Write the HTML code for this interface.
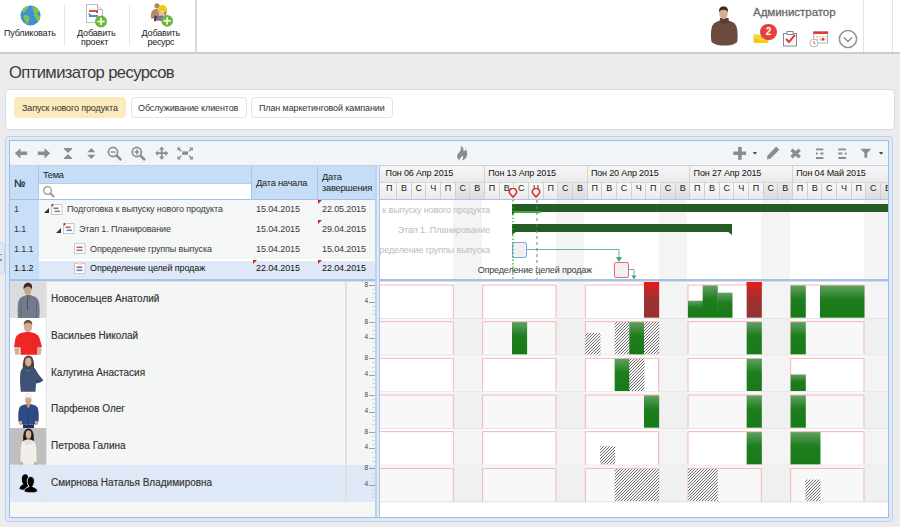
<!DOCTYPE html><html><head><meta charset="utf-8"><style>
*{margin:0;padding:0;box-sizing:border-box}
html,body{width:900px;height:527px;overflow:hidden;background:#ececec;font-family:"Liberation Sans",sans-serif;color:#333;position:relative}
.a{position:absolute}
.t{position:absolute;white-space:nowrap;line-height:1}
</style></head><body>
<div class="a" style="left:0;top:0;width:900px;height:52px;background:#fff"></div>
<div class="a" style="left:0;top:52px;width:900px;height:2px;background:#c9cdd3"></div>
<div class="a" style="left:64px;top:5px;width:1px;height:41px;background:#e8e8e8"></div>
<div class="a" style="left:129px;top:5px;width:1px;height:41px;background:#e8e8e8"></div>
<div class="a" style="left:195px;top:0;width:2px;height:52px;background:#dadbe2"></div>
<div class="a" style="left:863px;top:0;width:1px;height:52px;background:#e4e4e4"></div>
<div class="a" style="left:892px;top:0;width:1px;height:52px;background:#e4e4e4"></div>
<svg class="a" style="left:20px;top:5px" width="21" height="21" viewBox="0 0 21 21">
<circle cx="10.5" cy="10.5" r="10" fill="#3f8fd6"/>
<path d="M1.5,7 C2.5,4 5,1.8 8.5,1 C9.5,2 8.5,3.2 7,3.8 C6,4.5 6.5,5.5 5.5,6.5 C4.5,7.5 3,7.8 1.5,7 Z" fill="#80c34a"/>
<path d="M3.5,10.5 C5.5,9.5 8,10 9,11.5 C10,13 9.5,14.5 8.8,16 C8.2,17.5 7.5,19 6.8,19.5 C6,18.5 5.8,17 5,15.5 C4.3,14 3,12.5 3.5,10.5 Z" fill="#80c34a"/>
<path d="M12.5,1.2 C15.5,1.8 18.5,3.8 19.8,6.5 C19,7.8 17.5,7.5 16.5,8.5 C16.8,10 18.5,10.5 20.3,11.5 C20,14 19,16 18,17 C17,15.5 15.8,13.5 14.8,12 C13.8,10.5 14.5,8.5 13.8,7 C13,5.5 12,3 12.5,1.2 Z" fill="#80c34a"/>
</svg>
<div class="t" style="left:4px;top:29px;font-size:9px;letter-spacing:-0.15px;color:#222">Публиковать</div>
<svg class="a" style="left:85px;top:3px" width="24" height="26" viewBox="0 0 24 26">
<path d="M1.5,1.5 H12.5 L17.5,6.5 V19.5 H1.5 Z" fill="#fff" stroke="#bdbdbd" stroke-width="1"/>
<path d="M12.5,1.5 V6.5 H17.5" fill="#eee" stroke="#bdbdbd" stroke-width="1"/>
<rect x="4" y="7" width="9" height="2" fill="#e84c3d"/>
<rect x="11" y="8.5" width="2" height="1.5" fill="#e84c3d"/>
<rect x="4" y="12" width="9" height="2" fill="#4a90d9"/>
<rect x="3.5" y="10.5" width="2" height="1.5" fill="#4a90d9"/>
<circle cx="16" cy="18.5" r="6" fill="#6cb83a"/>
<rect x="12.4" y="17.7" width="7.2" height="1.6" fill="#fff"/>
<rect x="15.2" y="14.9" width="1.6" height="7.2" fill="#fff"/>
</svg>
<div class="t" style="left:77px;top:29px;font-size:9px;letter-spacing:-0.15px;color:#222">Добавить</div>
<div class="t" style="left:81px;top:38px;font-size:9px;letter-spacing:-0.15px;color:#222">проект</div>
<svg class="a" style="left:145px;top:0px" width="35" height="30" viewBox="145 0 35 30">
<circle cx="157" cy="5.8" r="2.6" fill="#b08866"/>
<path d="M151,18.5 C150.5,14 151.5,10.5 154,9.5 C156,8.8 158.5,9 160,10.5 L158.5,19 Z" fill="#b48a66"/>
<path d="M157.5,11.5 C157.3,7.5 159.5,5 162.5,5 C165.5,5 167.3,7.5 167.2,11.5 Z" fill="#f2c81c"/>
<path d="M158.8,11.5 H166 C166,14.5 164.5,16.5 162.4,16.5 C160.3,16.5 158.8,14.5 158.8,11.5 Z" fill="#e8c48e"/>
<path d="M164.5,11.5 H166.5 C166.5,14 165.8,15.5 164.8,16 Z" fill="#9a7050"/>
<path d="M157.5,15.5 L163.5,15.8 L163,18.5 L157,18.2 Z" fill="#3b82d8"/>
<path d="M157,18.2 L163,18.5 L162.3,21 L156.5,20.5 Z" fill="#e04040"/>
<path d="M154.5,15.5 L157,16 L156.2,21.5 L154,21 Z" fill="#2e3f5e"/>
<circle cx="167.2" cy="20.8" r="5.9" fill="#6cb83a"/>
<rect x="163.6" y="20" width="7.2" height="1.6" fill="#fff"/>
<rect x="166.4" y="17.2" width="1.6" height="7.2" fill="#fff"/>
</svg>
<div class="t" style="left:141.5px;top:29px;font-size:9px;letter-spacing:-0.15px;color:#222">Добавить</div>
<div class="t" style="left:147.5px;top:38px;font-size:9px;letter-spacing:-0.3px;color:#222">ресурс</div>
<svg class="a" style="left:705px;top:2px" width="40" height="48" viewBox="0 0 40 48">
<path d="M6.5,40 C5.5,34 5.8,27 7.5,23.5 C9,20.5 12,19.5 15.5,18.5 L23,18.5 C26.5,19.5 29.5,20.5 31,23.5 C32.7,27 33,34 32.2,40 C29,43 24,43.5 19.5,43.5 C15,43.5 10,43 6.5,40 Z" fill="#6c4a3c"/>
<path d="M15,16 H23.5 L24,20.5 C21,21.8 17.5,21.8 14.5,20.5 Z" fill="#5d3e32"/>
<ellipse cx="18.5" cy="11.5" rx="4.2" ry="5.6" fill="#d6ad92"/>
<path d="M14.2,10.5 C13.6,6 15.8,4.6 18.6,4.6 C21.5,4.6 23.4,6 22.9,10.5 C22.3,8.5 20.6,7.8 18.6,7.8 C16.6,7.8 14.8,8.5 14.2,10.5 Z" fill="#3c2a1f"/>
</svg>
<div class="t" style="left:753px;top:6.3px;font-size:11.6px;letter-spacing:-0.08px;-webkit-text-stroke:0.3px #6a6a6a;color:#6a6a6a">Администратор</div>
<svg class="a" style="left:752px;top:31px" width="18" height="14" viewBox="0 0 18 14">
<path d="M1.6,2.8 L16.5,6.5 V12 H1.6 Z" fill="#f7c90f"/>
<path d="M1.6,2.8 L9.5,8.5 L16.5,6.5 L16.5,7.5 L9.5,9.8 L1.6,4.5 Z" fill="#fff2a8" opacity="0.6"/>
</svg>
<div class="a" style="left:760.4px;top:23.7px;width:16.2px;height:16.2px;border-radius:50%;background:#e5413b"></div>
<div class="t" style="left:760.4px;top:27px;width:16.2px;text-align:center;font-size:10px;font-weight:bold;color:#fff">2</div>
<svg class="a" style="left:782px;top:30px" width="16" height="17" viewBox="0 0 16 17">
<rect x="1.5" y="3.5" width="13" height="12.5" fill="#fff" stroke="#888" stroke-width="1"/>
<rect x="5" y="1.5" width="6" height="3" fill="#fff" stroke="#888" stroke-width="1"/>
<path d="M4,9 L7,12 L13,5" fill="none" stroke="#e53935" stroke-width="2"/>
</svg>
<svg class="a" style="left:808px;top:30px" width="22" height="18" viewBox="0 0 22 18">
<rect x="5.8" y="2" width="13.8" height="11" fill="#fff" stroke="#aaa" stroke-width="0.9"/>
<rect x="5.3" y="1.4" width="14.8" height="2.6" fill="#e53935"/>
<g fill="#d4d4d4"><rect x="8" y="6" width="2" height="1.6"/><rect x="11" y="6" width="2" height="1.6"/><rect x="14" y="6" width="2" height="1.6"/><rect x="17" y="6" width="1.6" height="1.6"/><rect x="8" y="9" width="2" height="1.6"/><rect x="11" y="9" width="2" height="1.6"/><rect x="17" y="9" width="1.6" height="1.6"/></g>
<rect x="13.6" y="8" width="2.8" height="2.6" fill="#e53935"/>
<circle cx="5.9" cy="13" r="4" fill="#fff" stroke="#b0b0b0" stroke-width="0.9"/>
<path d="M5.9,10.8 V13 L7.5,14" fill="none" stroke="#e53935" stroke-width="0.9"/>
</svg>
<svg class="a" style="left:838px;top:29px" width="20" height="20" viewBox="0 0 20 20">
<circle cx="10" cy="10" r="8.6" fill="none" stroke="#909090" stroke-width="1.5"/>
<path d="M6,8.5 L10,12.5 L14,8.5" fill="none" stroke="#909090" stroke-width="1.5"/>
</svg>
<div class="t" style="left:9px;top:65.2px;font-size:16.6px;letter-spacing:-0.6px;color:#3a3a3a">Оптимизатор ресурсов</div>
<div class="a" style="left:5px;top:89px;width:890px;height:41px;background:#fff;border:1px solid #d9dbe0;border-radius:5px"></div>
<div class="a" style="left:14px;top:97px;width:112px;height:21px;background:#fbeabb;border-radius:4px"></div>
<div class="t" style="left:22px;top:104px;font-size:9px;letter-spacing:-0.12px;color:#333">Запуск нового продукта</div>
<div class="a" style="left:131px;top:97px;width:116px;height:21px;background:#fff;border:1px solid #e2e2e2;border-radius:4px"></div>
<div class="t" style="left:138px;top:104px;font-size:9px;letter-spacing:-0.12px;color:#333">Обслуживание клиентов</div>
<div class="a" style="left:251px;top:97px;width:142px;height:21px;background:#fff;border:1px solid #e2e2e2;border-radius:4px"></div>
<div class="t" style="left:259px;top:104px;font-size:9px;letter-spacing:-0.12px;color:#333">План маркетинговой кампании</div>
<div class="a" style="left:5px;top:136px;width:888px;height:386px;background:#dfe8f5;border:1px solid #b9d0ee;border-radius:3px"></div>
<div class="a" style="left:9px;top:140px;width:880px;height:378px;background:#fff;border:1px solid #9dbde8"></div>
<div class="a" style="left:10px;top:141px;width:878px;height:25px;background:#f1f4f8;border-bottom:1px solid #d0d0d0"></div>
<svg class="a" style="left:10px;top:141px" width="200" height="25" viewBox="10 141 200 25">
<path d="M14.8,153.3 L20.5,148.2 L20.5,151.6 L27.2,151.6 L27.2,155 L20.5,155 L20.5,158.5 Z" fill="#8c8c8c"/>
<path d="M50.2,153.3 L44.5,148.2 L44.5,151.6 L37.8,151.6 L37.8,155 L44.5,155 L44.5,158.5 Z" fill="#8c8c8c"/>
<path d="M64,148 H72 V149 L68,153 L64,149 Z M64,159 H72 V158 L68,154 L64,158 Z" fill="#8c8c8c"/>
<path d="M87.3,152.3 L91.3,148 L95.3,152.3 Z M87.3,154.7 L91.3,159 L95.3,154.7 Z" fill="#8c8c8c"/>
<circle cx="113" cy="152" r="4.6" fill="none" stroke="#8c8c8c" stroke-width="1.7"/>
<path d="M116.2,155.2 L121.2,160.2" stroke="#8c8c8c" stroke-width="2.6"/>
<path d="M110.6,152 H115.4" stroke="#8c8c8c" stroke-width="1.4"/>
<circle cx="136.8" cy="152" r="4.6" fill="none" stroke="#8c8c8c" stroke-width="1.7"/>
<path d="M140,155.2 L145,160.2" stroke="#8c8c8c" stroke-width="2.6"/>
<path d="M134.4,152 H139.2 M136.8,149.6 V154.4" stroke="#8c8c8c" stroke-width="1.4"/>
<path d="M161.7,146.6 L164.4,149.6 H162.6 V152.3 H165.3 V150.5 L168.3,153.2 L165.3,155.9 V154.1 H162.6 V156.8 H164.4 L161.7,159.8 L159,156.8 H160.8 V154.1 H158.1 V155.9 L155.1,153.2 L158.1,150.5 V152.3 H160.8 V149.6 H159 Z" fill="#8c8c8c"/>
<path d="M178.5,148.5 L181.2,151.2 M191.8,148.5 L189.1,151.2 M178.5,158.5 L181.2,155.8 M191.8,158.5 L189.1,155.8" stroke="#8c8c8c" stroke-width="1.4"/>
<path d="M177.4,147.4 H180.9 L177.4,150.9 Z M192.9,147.4 H189.4 L192.9,150.9 Z M177.4,159.6 H180.9 L177.4,156.1 Z M192.9,159.6 H189.4 L192.9,156.1 Z" fill="#8c8c8c"/>
<rect x="182.2" y="151.4" width="5.8" height="3.4" fill="#8c8c8c"/>
</svg>
<svg class="a" style="left:455px;top:144px" width="14" height="18" viewBox="0 0 14 18">
<path d="M5.5,1.8 C9,3.5 8.5,6.5 8.8,7.5 C9.5,6.8 10.5,6 11,5.2 C12.5,8 12.5,11.5 11.5,13 C10.5,15 8.5,16.2 7,16.2 C8.5,14.8 8.5,12.5 7.2,11.5 C6.8,13 5.5,14 4.8,14.6 C4.5,15.2 4.6,15.9 5.2,16.2 C3.5,15.8 2,14.5 2,12.5 C2,10 4.5,8.5 5.5,6.5 C6,5.2 6,3.5 5.5,1.8 Z" fill="#8c8c8c"/>
</svg>
<svg class="a" style="left:725px;top:141px" width="165" height="25" viewBox="725 141 165 25">
<path d="M738.1,146.9 H741.7 V151.6 H746.1 V155.1 H741.7 V159.8 H738.1 V155.1 H733.2 V151.6 H738.1 Z" fill="#8c8c8c"/>
<path d="M752.8,152.2 H757 L754.9,154.4 Z" fill="#222"/>
<path d="M776.2,146.6 L779.3,149.7 L770.6,158.4 L766.9,159.6 L767.6,155.6 Z" fill="#8c8c8c"/>
<path d="M791.5,149.7 L799.7,157.2 M799.7,149.7 L791.5,157.2" stroke="#8c8c8c" stroke-width="3.4"/>
<path d="M816,149.4 H823.4 M820.3,153.5 H823.4 M816,158 H823.4" stroke="#8c8c8c" stroke-width="1.8"/>
<path d="M816,151.9 L818.3,153.5 L816,155.1 Z" fill="#8c8c8c"/>
<path d="M838.3,149.4 H846 M838.3,153.5 H842.3 M838.3,158 H846" stroke="#8c8c8c" stroke-width="1.8"/>
<path d="M846.5,151.9 L844.2,153.5 L846.5,155.1 Z" fill="#8c8c8c"/>
<path d="M860.3,148.7 H871.3 L867.2,153 V157.7 H864.4 V153 Z" fill="#8c8c8c"/>
<path d="M879,152.2 H883.2 L881.1,154.4 Z" fill="#222"/>
</svg>
<div class="a" style="left:10px;top:166px;width:366px;height:34px;background:#c6ddf8;border-bottom:1px solid #9fbfe6"></div>
<div class="a" style="left:38px;top:166px;width:1px;height:34px;background:#a9c5ea"></div>
<div class="a" style="left:251px;top:166px;width:1px;height:34px;background:#a9c5ea"></div>
<div class="a" style="left:317px;top:166px;width:1px;height:34px;background:#a9c5ea"></div>
<div class="a" style="left:375px;top:166px;width:1px;height:34px;background:#a9c5ea"></div>
<div class="t" style="left:14px;top:177.5px;font-size:10.5px;color:#1a1a1a;-webkit-text-stroke:0.2px #1a1a1a">№</div>
<div class="t" style="left:43px;top:170.5px;font-size:9.3px;letter-spacing:-0.3px;color:#1a1a1a">Тема</div>
<div class="a" style="left:39px;top:183px;width:212px;height:16px;background:#fff;border-top:1px solid #b5cce8"></div>
<svg class="a" style="left:42px;top:185px" width="14" height="14" viewBox="0 0 14 14">
<circle cx="5.5" cy="5.5" r="3.8" fill="none" stroke="#9a9a9a" stroke-width="1.3"/>
<path d="M8.3,8.3 L12,12" stroke="#9a9a9a" stroke-width="2"/></svg>
<div class="t" style="left:256px;top:179px;font-size:9.3px;letter-spacing:-0.25px;color:#222">Дата начала</div>
<div class="t" style="left:322px;top:172px;font-size:9.3px;letter-spacing:-0.25px;color:#222;line-height:10.5px">Дата<br>завершения</div>
<div class="a" style="left:39px;top:200px;width:337px;height:20px;background:#f5f6f6"></div>
<div class="a" style="left:10px;top:200px;width:29px;height:20px;background:#c9def7"></div>
<div class="t" style="left:14px;top:204.4px;font-size:9px;letter-spacing:-0.12px;transform:scaleY(1.1);transform-origin:0 0;color:#3a3a3a">1</div>
<svg class="a" style="left:44px;top:208px" width="5" height="5" viewBox="0 0 5 5"><path d="M0,5 L5,0 V5 Z" fill="#333"/></svg>
<svg class="a" style="left:51px;top:202.5px" width="12" height="12" viewBox="0 0 12 12">
<rect x="0.5" y="1.5" width="10.5" height="10" fill="#fff" stroke="#c8c8c8"/>
<rect x="2.5" y="4.5" width="5" height="1.6" fill="#e84c3d"/><rect x="3.5" y="7.5" width="5.5" height="1.6" fill="#4a90d9"/>
<path d="M1.5,1 V3.5 M0.3,2.2 H2.7" stroke="#444" stroke-width="0.8"/></svg>
<div class="t" style="left:67px;top:204.4px;font-size:9px;letter-spacing:-0.12px;transform:scaleY(1.1);transform-origin:0 0;color:#3a3a3a">Подготовка к выпуску нового продукта</div>
<div class="t" style="left:256px;top:204.4px;font-size:9px;letter-spacing:-0.12px;transform:scaleY(1.1);transform-origin:0 0;color:#3a3a3a">15.04.2015</div>
<div class="t" style="left:322px;top:204.4px;font-size:9px;letter-spacing:-0.12px;transform:scaleY(1.1);transform-origin:0 0;color:#3a3a3a">22.05.2015</div>
<div class="a" style="left:39px;top:219.67px;width:337px;height:20px;background:#f5f6f6"></div>
<div class="a" style="left:10px;top:219.67px;width:29px;height:20px;background:#c9def7"></div>
<div class="t" style="left:14px;top:224.07px;font-size:9px;letter-spacing:-0.12px;transform:scaleY(1.1);transform-origin:0 0;color:#3a3a3a">1.1</div>
<svg class="a" style="left:56px;top:227.67px" width="5" height="5" viewBox="0 0 5 5"><path d="M0,5 L5,0 V5 Z" fill="#333"/></svg>
<svg class="a" style="left:63px;top:222.17px" width="12" height="12" viewBox="0 0 12 12">
<rect x="0.5" y="1.5" width="10.5" height="10" fill="#fff" stroke="#c8c8c8"/>
<rect x="2.5" y="4.5" width="5" height="1.6" fill="#e84c3d"/><rect x="3.5" y="7.5" width="5.5" height="1.6" fill="#4a90d9"/>
<path d="M1.5,1 V3.5 M0.3,2.2 H2.7" stroke="#444" stroke-width="0.8"/></svg>
<div class="t" style="left:79px;top:224.07px;font-size:9px;letter-spacing:-0.12px;transform:scaleY(1.1);transform-origin:0 0;color:#3a3a3a">Этап 1. Планирование</div>
<div class="t" style="left:256px;top:224.07px;font-size:9px;letter-spacing:-0.12px;transform:scaleY(1.1);transform-origin:0 0;color:#3a3a3a">15.04.2015</div>
<div class="t" style="left:322px;top:224.07px;font-size:9px;letter-spacing:-0.12px;transform:scaleY(1.1);transform-origin:0 0;color:#3a3a3a">29.04.2015</div>
<div class="a" style="left:39px;top:239.34px;width:337px;height:20px;background:#f5f6f6"></div>
<div class="a" style="left:10px;top:239.34px;width:29px;height:20px;background:#c9def7"></div>
<div class="t" style="left:14px;top:243.74px;font-size:9px;letter-spacing:-0.12px;transform:scaleY(1.1);transform-origin:0 0;color:#3a3a3a">1.1.1</div>
<svg class="a" style="left:74px;top:241.84px" width="12" height="12" viewBox="0 0 12 12">
<rect x="0.5" y="1.5" width="10.5" height="10" fill="#fff" stroke="#c8c8c8"/>
<rect x="4" y="0.5" width="3.5" height="2" fill="#ddd"/>
<rect x="2.5" y="4.5" width="6" height="1.6" fill="#e84c3d"/><rect x="2.5" y="7.5" width="6" height="1.6" fill="#4a90d9"/></svg>
<div class="t" style="left:90px;top:243.74px;font-size:9px;letter-spacing:-0.12px;transform:scaleY(1.1);transform-origin:0 0;color:#3a3a3a">Определение группы выпуска</div>
<div class="t" style="left:256px;top:243.74px;font-size:9px;letter-spacing:-0.12px;transform:scaleY(1.1);transform-origin:0 0;color:#3a3a3a">15.04.2015</div>
<div class="t" style="left:322px;top:243.74px;font-size:9px;letter-spacing:-0.12px;transform:scaleY(1.1);transform-origin:0 0;color:#3a3a3a">15.04.2015</div>
<div class="a" style="left:39px;top:260.5px;width:337px;height:18.5px;background:#dfe8f6"></div>
<div class="a" style="left:10px;top:259.01px;width:29px;height:20px;background:#c9def7"></div>
<div class="t" style="left:14px;top:263.41px;font-size:9px;letter-spacing:-0.12px;transform:scaleY(1.1);transform-origin:0 0;color:#111">1.1.2</div>
<svg class="a" style="left:74px;top:261.51px" width="12" height="12" viewBox="0 0 12 12">
<rect x="0.5" y="1.5" width="10.5" height="10" fill="#fff" stroke="#c8c8c8"/>
<rect x="4" y="0.5" width="3.5" height="2" fill="#ddd"/>
<rect x="2.5" y="4.5" width="6" height="1.6" fill="#e84c3d"/><rect x="2.5" y="7.5" width="6" height="1.6" fill="#4a90d9"/></svg>
<div class="t" style="left:90px;top:263.41px;font-size:9px;letter-spacing:-0.12px;transform:scaleY(1.1);transform-origin:0 0;color:#111">Определение целей продаж</div>
<div class="t" style="left:256px;top:263.41px;font-size:9px;letter-spacing:-0.12px;transform:scaleY(1.1);transform-origin:0 0;color:#111">22.04.2015</div>
<div class="t" style="left:322px;top:263.41px;font-size:9px;letter-spacing:-0.12px;transform:scaleY(1.1);transform-origin:0 0;color:#111">22.04.2015</div>
<svg class="a" style="left:318px;top:200px" width="5" height="5"><path d="M0,0 H4 L0,4 Z" fill="#d42020"/></svg>
<svg class="a" style="left:318px;top:220px" width="5" height="5"><path d="M0,0 H4 L0,4 Z" fill="#d42020"/></svg>
<svg class="a" style="left:253px;top:260px" width="5" height="5"><path d="M0,0 H4 L0,4 Z" fill="#d42020"/></svg>
<svg class="a" style="left:318px;top:260px" width="5" height="5"><path d="M0,0 H4 L0,4 Z" fill="#d42020"/></svg>
<div class="a" style="left:10px;top:502px;width:366px;height:15px;background:#f5f6f6"></div>
<div class="a" style="left:380px;top:166px;width:508px;height:17px;background:linear-gradient(#f7f7f7,#e9e9e9);border-bottom:1px solid #d6d6d6"></div>
<div class="a" style="left:380px;top:183px;width:508px;height:16px;background:linear-gradient(#f8f8f8,#ebebeb)"></div>
<div class="a" style="left:380px;top:199px;width:508px;height:1px;background:#a9c6ea"></div>
<div class="a" style="left:380px;top:166px;width:508px;height:34px;overflow:hidden"><div class="a" style="left:-380px;top:-166px;width:900px;height:527px"><div class="t" style="left:385.6px;top:168.5px;font-size:9px;letter-spacing:-0.15px;color:#111">Пон 06 Апр 2015</div>
<div class="t" style="left:488.27px;top:168.5px;font-size:9px;letter-spacing:-0.15px;color:#111">Пон 13 Апр 2015</div>
<div class="a" style="left:483.97px;top:166px;width:1px;height:17px;background:#d4d4d4"></div>
<div class="t" style="left:590.93px;top:168.5px;font-size:9px;letter-spacing:-0.15px;color:#111">Пон 20 Апр 2015</div>
<div class="a" style="left:586.63px;top:166px;width:1px;height:17px;background:#d4d4d4"></div>
<div class="t" style="left:693.6px;top:168.5px;font-size:9px;letter-spacing:-0.15px;color:#111">Пон 27 Апр 2015</div>
<div class="a" style="left:689.3px;top:166px;width:1px;height:17px;background:#d4d4d4"></div>
<div class="t" style="left:796.27px;top:168.5px;font-size:9px;letter-spacing:-0.15px;color:#111">Пон 04 Май 2015</div>
<div class="a" style="left:791.97px;top:166px;width:1px;height:17px;background:#d4d4d4"></div>
<div class="a" style="left:395.97px;top:183px;width:1px;height:16px;background:#d0d0d0"></div>
<div class="t" style="left:382px;top:184.3px;width:14.67px;text-align:center;font-size:9px;color:#1a1a1a">П</div>
<div class="a" style="left:410.63px;top:183px;width:1px;height:16px;background:#d0d0d0"></div>
<div class="t" style="left:396.67px;top:184.3px;width:14.67px;text-align:center;font-size:9px;color:#1a1a1a">В</div>
<div class="a" style="left:425.3px;top:183px;width:1px;height:16px;background:#d0d0d0"></div>
<div class="t" style="left:411.33px;top:184.3px;width:14.67px;text-align:center;font-size:9px;color:#1a1a1a">С</div>
<div class="a" style="left:439.97px;top:183px;width:1px;height:16px;background:#d0d0d0"></div>
<div class="t" style="left:426px;top:184.3px;width:14.67px;text-align:center;font-size:9px;color:#1a1a1a">Ч</div>
<div class="a" style="left:454.63px;top:183px;width:1px;height:16px;background:#d0d0d0"></div>
<div class="t" style="left:440.67px;top:184.3px;width:14.67px;text-align:center;font-size:9px;color:#1a1a1a">П</div>
<div class="a" style="left:455.63px;top:183px;width:14.67px;height:16px;background:linear-gradient(#ececec,#dcdcdc)"></div>
<div class="a" style="left:469.3px;top:183px;width:1px;height:16px;background:#d0d0d0"></div>
<div class="t" style="left:455.33px;top:184.3px;width:14.67px;text-align:center;font-size:9px;color:#1a1a1a">С</div>
<div class="a" style="left:470.3px;top:183px;width:14.67px;height:16px;background:linear-gradient(#ececec,#dcdcdc)"></div>
<div class="a" style="left:483.97px;top:183px;width:1px;height:16px;background:#d0d0d0"></div>
<div class="t" style="left:470px;top:184.3px;width:14.67px;text-align:center;font-size:9px;color:#1a1a1a">В</div>
<div class="a" style="left:498.63px;top:183px;width:1px;height:16px;background:#d0d0d0"></div>
<div class="t" style="left:484.67px;top:184.3px;width:14.67px;text-align:center;font-size:9px;color:#1a1a1a">П</div>
<div class="a" style="left:513.3px;top:183px;width:1px;height:16px;background:#d0d0d0"></div>
<div class="t" style="left:499.33px;top:184.3px;width:14.67px;text-align:center;font-size:9px;color:#1a1a1a">В</div>
<div class="a" style="left:527.97px;top:183px;width:1px;height:16px;background:#d0d0d0"></div>
<div class="t" style="left:514px;top:184.3px;width:14.67px;text-align:center;font-size:9px;color:#1a1a1a">С</div>
<div class="a" style="left:542.63px;top:183px;width:1px;height:16px;background:#d0d0d0"></div>
<div class="t" style="left:528.67px;top:184.3px;width:14.67px;text-align:center;font-size:9px;color:#1a1a1a">Ч</div>
<div class="a" style="left:557.3px;top:183px;width:1px;height:16px;background:#d0d0d0"></div>
<div class="t" style="left:543.33px;top:184.3px;width:14.67px;text-align:center;font-size:9px;color:#1a1a1a">П</div>
<div class="a" style="left:558.3px;top:183px;width:14.67px;height:16px;background:linear-gradient(#ececec,#dcdcdc)"></div>
<div class="a" style="left:571.97px;top:183px;width:1px;height:16px;background:#d0d0d0"></div>
<div class="t" style="left:558px;top:184.3px;width:14.67px;text-align:center;font-size:9px;color:#1a1a1a">С</div>
<div class="a" style="left:572.97px;top:183px;width:14.67px;height:16px;background:linear-gradient(#ececec,#dcdcdc)"></div>
<div class="a" style="left:586.63px;top:183px;width:1px;height:16px;background:#d0d0d0"></div>
<div class="t" style="left:572.67px;top:184.3px;width:14.67px;text-align:center;font-size:9px;color:#1a1a1a">В</div>
<div class="a" style="left:601.3px;top:183px;width:1px;height:16px;background:#d0d0d0"></div>
<div class="t" style="left:587.33px;top:184.3px;width:14.67px;text-align:center;font-size:9px;color:#1a1a1a">П</div>
<div class="a" style="left:615.97px;top:183px;width:1px;height:16px;background:#d0d0d0"></div>
<div class="t" style="left:602px;top:184.3px;width:14.67px;text-align:center;font-size:9px;color:#1a1a1a">В</div>
<div class="a" style="left:630.63px;top:183px;width:1px;height:16px;background:#d0d0d0"></div>
<div class="t" style="left:616.67px;top:184.3px;width:14.67px;text-align:center;font-size:9px;color:#1a1a1a">С</div>
<div class="a" style="left:645.3px;top:183px;width:1px;height:16px;background:#d0d0d0"></div>
<div class="t" style="left:631.33px;top:184.3px;width:14.67px;text-align:center;font-size:9px;color:#1a1a1a">Ч</div>
<div class="a" style="left:659.97px;top:183px;width:1px;height:16px;background:#d0d0d0"></div>
<div class="t" style="left:646px;top:184.3px;width:14.67px;text-align:center;font-size:9px;color:#1a1a1a">П</div>
<div class="a" style="left:660.97px;top:183px;width:14.67px;height:16px;background:linear-gradient(#ececec,#dcdcdc)"></div>
<div class="a" style="left:674.63px;top:183px;width:1px;height:16px;background:#d0d0d0"></div>
<div class="t" style="left:660.67px;top:184.3px;width:14.67px;text-align:center;font-size:9px;color:#1a1a1a">С</div>
<div class="a" style="left:675.63px;top:183px;width:14.67px;height:16px;background:linear-gradient(#ececec,#dcdcdc)"></div>
<div class="a" style="left:689.3px;top:183px;width:1px;height:16px;background:#d0d0d0"></div>
<div class="t" style="left:675.33px;top:184.3px;width:14.67px;text-align:center;font-size:9px;color:#1a1a1a">В</div>
<div class="a" style="left:703.97px;top:183px;width:1px;height:16px;background:#d0d0d0"></div>
<div class="t" style="left:690px;top:184.3px;width:14.67px;text-align:center;font-size:9px;color:#1a1a1a">П</div>
<div class="a" style="left:718.63px;top:183px;width:1px;height:16px;background:#d0d0d0"></div>
<div class="t" style="left:704.67px;top:184.3px;width:14.67px;text-align:center;font-size:9px;color:#1a1a1a">В</div>
<div class="a" style="left:733.3px;top:183px;width:1px;height:16px;background:#d0d0d0"></div>
<div class="t" style="left:719.33px;top:184.3px;width:14.67px;text-align:center;font-size:9px;color:#1a1a1a">С</div>
<div class="a" style="left:747.97px;top:183px;width:1px;height:16px;background:#d0d0d0"></div>
<div class="t" style="left:734px;top:184.3px;width:14.67px;text-align:center;font-size:9px;color:#1a1a1a">Ч</div>
<div class="a" style="left:762.63px;top:183px;width:1px;height:16px;background:#d0d0d0"></div>
<div class="t" style="left:748.67px;top:184.3px;width:14.67px;text-align:center;font-size:9px;color:#1a1a1a">П</div>
<div class="a" style="left:763.63px;top:183px;width:14.67px;height:16px;background:linear-gradient(#ececec,#dcdcdc)"></div>
<div class="a" style="left:777.3px;top:183px;width:1px;height:16px;background:#d0d0d0"></div>
<div class="t" style="left:763.33px;top:184.3px;width:14.67px;text-align:center;font-size:9px;color:#1a1a1a">С</div>
<div class="a" style="left:778.3px;top:183px;width:14.67px;height:16px;background:linear-gradient(#ececec,#dcdcdc)"></div>
<div class="a" style="left:791.97px;top:183px;width:1px;height:16px;background:#d0d0d0"></div>
<div class="t" style="left:778px;top:184.3px;width:14.67px;text-align:center;font-size:9px;color:#1a1a1a">В</div>
<div class="a" style="left:806.63px;top:183px;width:1px;height:16px;background:#d0d0d0"></div>
<div class="t" style="left:792.67px;top:184.3px;width:14.67px;text-align:center;font-size:9px;color:#1a1a1a">П</div>
<div class="a" style="left:821.3px;top:183px;width:1px;height:16px;background:#d0d0d0"></div>
<div class="t" style="left:807.33px;top:184.3px;width:14.67px;text-align:center;font-size:9px;color:#1a1a1a">В</div>
<div class="a" style="left:835.97px;top:183px;width:1px;height:16px;background:#d0d0d0"></div>
<div class="t" style="left:822px;top:184.3px;width:14.67px;text-align:center;font-size:9px;color:#1a1a1a">С</div>
<div class="a" style="left:850.63px;top:183px;width:1px;height:16px;background:#d0d0d0"></div>
<div class="t" style="left:836.67px;top:184.3px;width:14.67px;text-align:center;font-size:9px;color:#1a1a1a">Ч</div>
<div class="a" style="left:865.3px;top:183px;width:1px;height:16px;background:#d0d0d0"></div>
<div class="t" style="left:851.33px;top:184.3px;width:14.67px;text-align:center;font-size:9px;color:#1a1a1a">П</div>
<div class="a" style="left:866.3px;top:183px;width:14.67px;height:16px;background:linear-gradient(#ececec,#dcdcdc)"></div>
<div class="a" style="left:879.97px;top:183px;width:1px;height:16px;background:#d0d0d0"></div>
<div class="t" style="left:866px;top:184.3px;width:14.67px;text-align:center;font-size:9px;color:#1a1a1a">С</div>
<div class="a" style="left:880.97px;top:183px;width:14.67px;height:16px;background:linear-gradient(#ececec,#dcdcdc)"></div>
<div class="a" style="left:894.63px;top:183px;width:1px;height:16px;background:#d0d0d0"></div>
<div class="t" style="left:880.67px;top:184.3px;width:14.67px;text-align:center;font-size:9px;color:#1a1a1a">В</div></div></div>
<div class="a" style="left:380px;top:200px;width:508px;height:79px;overflow:hidden"><div class="a" style="left:-380px;top:-200px;width:900px;height:527px"><div class="a" style="left:380px;top:200px;width:508px;height:79px;background:#fff"></div>
<div class="a" style="left:453.33px;top:200px;width:28.33px;height:79px;background:#f4f4f4"></div>
<div class="a" style="left:556px;top:200px;width:28.33px;height:79px;background:#f4f4f4"></div>
<div class="a" style="left:658.67px;top:200px;width:28.33px;height:79px;background:#f4f4f4"></div>
<div class="a" style="left:761.33px;top:200px;width:28.33px;height:79px;background:#f4f4f4"></div>
<div class="a" style="left:864px;top:200px;width:28.33px;height:79px;background:#f4f4f4"></div>
<div class="t" style="left:200px;top:206px;width:290px;text-align:right;font-size:9px;letter-spacing:-0.1px;color:#bcbcbc">Подготовка к выпуску нового продукта</div>
<div class="t" style="left:200px;top:226px;width:290px;text-align:right;font-size:9px;letter-spacing:-0.1px;color:#bcbcbc">Этап 1. Планирование</div>
<div class="t" style="left:200px;top:246px;width:290px;text-align:right;font-size:9px;letter-spacing:-0.1px;color:#bcbcbc">Определение группы выпуска</div>
<div class="t" style="left:300px;top:266px;width:292px;text-align:right;font-size:9px;letter-spacing:-0.15px;color:#3a3a3a">Определение целей продаж</div>
<div class="a" style="left:512px;top:204px;width:376px;height:8px;background:#245c24"></div>
<svg class="a" style="left:512px;top:211px" width="6" height="5"><path d="M0,0 H5 L0,4 Z" fill="#245c24"/></svg>
<div class="a" style="left:514px;top:211px;width:27px;height:2px;background:#3fae3f"></div>
<div class="a" style="left:512px;top:224px;width:220px;height:8px;background:#245c24"></div>
<svg class="a" style="left:512px;top:231px" width="6" height="5"><path d="M0,0 H5 L0,4 Z" fill="#245c24"/></svg>
<svg class="a" style="left:726px;top:231px" width="6" height="5"><path d="M6,0 H1 L6,4 Z" fill="#245c24"/></svg>
<div class="a" style="left:512px;top:242px;width:15px;height:16px;background:#f0f0f0;border:1.5px solid #7aaae6;border-radius:2px"></div>
<div class="a" style="left:614px;top:262px;width:15px;height:16px;background:#f0f0f0;border:1.5px solid #ea6a6a;border-radius:2px"></div>
<svg class="a" style="left:380px;top:200px" width="508" height="80" viewBox="380 200 508 80">
<path d="M527,249.5 H619 V258" fill="none" stroke="#5fb99a" stroke-width="1"/>
<path d="M616,257 H622 L619,262 Z" fill="#3aa57a"/>
<path d="M629,269.5 H634 V276" fill="none" stroke="#5fb99a" stroke-width="1"/>
<path d="M631.5,275.5 H636.5 L634,279.5 Z" fill="#3aa57a"/>
<path d="M513,200 V280" stroke="#22aa22" stroke-width="1.2" stroke-dasharray="1.5,2"/>
<path d="M537,200 V280" stroke="#777" stroke-width="1" stroke-dasharray="3,3"/>
</svg></div></div>
<svg class="a" style="left:508px;top:188px" width="10" height="10" viewBox="0 0 10 10">
<path d="M5,9 L2.3,6 A3.5,3.5 0 1 1 7.7,6 Z" fill="#fff" stroke="#e02424" stroke-width="1.5"/></svg>
<svg class="a" style="left:531.3px;top:188px" width="10" height="10" viewBox="0 0 10 10">
<path d="M5,9 L2.3,6 A3.5,3.5 0 1 1 7.7,6 Z" fill="#fff" stroke="#e02424" stroke-width="1.5"/></svg>
<div class="a" style="left:10px;top:281.7px;width:366px;height:36.67px;background:#f4f5f5"></div>
<div class="t" style="left:51px;top:294.3px;font-size:10px;color:#333;-webkit-text-stroke:0.15px #333">Новосельцев Анатолий</div>
<div class="a" style="left:345px;top:281.7px;width:1.5px;height:36.67px;background:#e0e0e0"></div>
<div class="a" style="left:46px;top:281.7px;width:1px;height:36.67px;background:#e6e6e6"></div>
<div class="t" style="left:364.5px;top:282px;font-size:6.5px;color:#444">8</div>
<div class="t" style="left:364.5px;top:297.6px;font-size:6.5px;color:#444">4</div>
<div class="a" style="left:369px;top:285px;width:6px;height:1px;background:#a0a0a0"></div>
<div class="a" style="left:369px;top:301.6px;width:6px;height:1px;background:#a0a0a0"></div>
<div class="a" style="left:371.5px;top:289.15px;width:3.5px;height:1px;background:#d6d6d6"></div>
<div class="a" style="left:371.5px;top:293.3px;width:3.5px;height:1px;background:#d6d6d6"></div>
<div class="a" style="left:371.5px;top:297.45px;width:3.5px;height:1px;background:#d6d6d6"></div>
<div class="a" style="left:371.5px;top:305.75px;width:3.5px;height:1px;background:#d6d6d6"></div>
<div class="a" style="left:371.5px;top:309.9px;width:3.5px;height:1px;background:#d6d6d6"></div>
<div class="a" style="left:371.5px;top:314.05px;width:3.5px;height:1px;background:#d6d6d6"></div>
<div class="a" style="left:10px;top:318.37px;width:366px;height:36.67px;background:#f4f5f5"></div>
<div class="t" style="left:51px;top:330.97px;font-size:10px;color:#333;-webkit-text-stroke:0.15px #333">Васильев Николай</div>
<div class="a" style="left:345px;top:318.37px;width:1.5px;height:36.67px;background:#e0e0e0"></div>
<div class="a" style="left:46px;top:318.37px;width:1px;height:36.67px;background:#e6e6e6"></div>
<div class="t" style="left:364.5px;top:318.67px;font-size:6.5px;color:#444">8</div>
<div class="t" style="left:364.5px;top:334.27px;font-size:6.5px;color:#444">4</div>
<div class="a" style="left:369px;top:321.67px;width:6px;height:1px;background:#a0a0a0"></div>
<div class="a" style="left:369px;top:338.27px;width:6px;height:1px;background:#a0a0a0"></div>
<div class="a" style="left:371.5px;top:325.82px;width:3.5px;height:1px;background:#d6d6d6"></div>
<div class="a" style="left:371.5px;top:329.97px;width:3.5px;height:1px;background:#d6d6d6"></div>
<div class="a" style="left:371.5px;top:334.12px;width:3.5px;height:1px;background:#d6d6d6"></div>
<div class="a" style="left:371.5px;top:342.42px;width:3.5px;height:1px;background:#d6d6d6"></div>
<div class="a" style="left:371.5px;top:346.57px;width:3.5px;height:1px;background:#d6d6d6"></div>
<div class="a" style="left:371.5px;top:350.72px;width:3.5px;height:1px;background:#d6d6d6"></div>
<div class="a" style="left:10px;top:355.04px;width:366px;height:36.67px;background:#f4f5f5"></div>
<div class="t" style="left:51px;top:367.64px;font-size:10px;color:#333;-webkit-text-stroke:0.15px #333">Калугина Анастасия</div>
<div class="a" style="left:345px;top:355.04px;width:1.5px;height:36.67px;background:#e0e0e0"></div>
<div class="a" style="left:46px;top:355.04px;width:1px;height:36.67px;background:#e6e6e6"></div>
<div class="t" style="left:364.5px;top:355.34px;font-size:6.5px;color:#444">8</div>
<div class="t" style="left:364.5px;top:370.94px;font-size:6.5px;color:#444">4</div>
<div class="a" style="left:369px;top:358.34px;width:6px;height:1px;background:#a0a0a0"></div>
<div class="a" style="left:369px;top:374.94px;width:6px;height:1px;background:#a0a0a0"></div>
<div class="a" style="left:371.5px;top:362.49px;width:3.5px;height:1px;background:#d6d6d6"></div>
<div class="a" style="left:371.5px;top:366.64px;width:3.5px;height:1px;background:#d6d6d6"></div>
<div class="a" style="left:371.5px;top:370.79px;width:3.5px;height:1px;background:#d6d6d6"></div>
<div class="a" style="left:371.5px;top:379.09px;width:3.5px;height:1px;background:#d6d6d6"></div>
<div class="a" style="left:371.5px;top:383.24px;width:3.5px;height:1px;background:#d6d6d6"></div>
<div class="a" style="left:371.5px;top:387.39px;width:3.5px;height:1px;background:#d6d6d6"></div>
<div class="a" style="left:10px;top:391.71px;width:366px;height:36.67px;background:#f4f5f5"></div>
<div class="t" style="left:51px;top:404.31px;font-size:10px;color:#333;-webkit-text-stroke:0.15px #333">Парфенов Олег</div>
<div class="a" style="left:345px;top:391.71px;width:1.5px;height:36.67px;background:#e0e0e0"></div>
<div class="a" style="left:46px;top:391.71px;width:1px;height:36.67px;background:#e6e6e6"></div>
<div class="t" style="left:364.5px;top:392.01px;font-size:6.5px;color:#444">8</div>
<div class="t" style="left:364.5px;top:407.61px;font-size:6.5px;color:#444">4</div>
<div class="a" style="left:369px;top:395.01px;width:6px;height:1px;background:#a0a0a0"></div>
<div class="a" style="left:369px;top:411.61px;width:6px;height:1px;background:#a0a0a0"></div>
<div class="a" style="left:371.5px;top:399.16px;width:3.5px;height:1px;background:#d6d6d6"></div>
<div class="a" style="left:371.5px;top:403.31px;width:3.5px;height:1px;background:#d6d6d6"></div>
<div class="a" style="left:371.5px;top:407.46px;width:3.5px;height:1px;background:#d6d6d6"></div>
<div class="a" style="left:371.5px;top:415.76px;width:3.5px;height:1px;background:#d6d6d6"></div>
<div class="a" style="left:371.5px;top:419.91px;width:3.5px;height:1px;background:#d6d6d6"></div>
<div class="a" style="left:371.5px;top:424.06px;width:3.5px;height:1px;background:#d6d6d6"></div>
<div class="a" style="left:10px;top:428.38px;width:366px;height:36.67px;background:#f4f5f5"></div>
<div class="t" style="left:51px;top:440.98px;font-size:10px;color:#333;-webkit-text-stroke:0.15px #333">Петрова Галина</div>
<div class="a" style="left:345px;top:428.38px;width:1.5px;height:36.67px;background:#e0e0e0"></div>
<div class="a" style="left:46px;top:428.38px;width:1px;height:36.67px;background:#e6e6e6"></div>
<div class="t" style="left:364.5px;top:428.68px;font-size:6.5px;color:#444">8</div>
<div class="t" style="left:364.5px;top:444.28px;font-size:6.5px;color:#444">4</div>
<div class="a" style="left:369px;top:431.68px;width:6px;height:1px;background:#a0a0a0"></div>
<div class="a" style="left:369px;top:448.28px;width:6px;height:1px;background:#a0a0a0"></div>
<div class="a" style="left:371.5px;top:435.83px;width:3.5px;height:1px;background:#d6d6d6"></div>
<div class="a" style="left:371.5px;top:439.98px;width:3.5px;height:1px;background:#d6d6d6"></div>
<div class="a" style="left:371.5px;top:444.13px;width:3.5px;height:1px;background:#d6d6d6"></div>
<div class="a" style="left:371.5px;top:452.43px;width:3.5px;height:1px;background:#d6d6d6"></div>
<div class="a" style="left:371.5px;top:456.58px;width:3.5px;height:1px;background:#d6d6d6"></div>
<div class="a" style="left:371.5px;top:460.73px;width:3.5px;height:1px;background:#d6d6d6"></div>
<div class="a" style="left:10px;top:465.05px;width:366px;height:36.67px;background:#dfe8f6"></div>
<div class="t" style="left:51px;top:477.65px;font-size:10px;color:#333;-webkit-text-stroke:0.15px #333">Смирнова Наталья Владимировна</div>
<div class="a" style="left:345px;top:465.05px;width:1.5px;height:36.67px;background:#e0e0e0"></div>
<div class="a" style="left:46px;top:465.05px;width:1px;height:36.67px;background:#e6e6e6"></div>
<div class="t" style="left:364.5px;top:465.35px;font-size:6.5px;color:#444">8</div>
<div class="t" style="left:364.5px;top:480.95px;font-size:6.5px;color:#444">4</div>
<div class="a" style="left:369px;top:468.35px;width:6px;height:1px;background:#a0a0a0"></div>
<div class="a" style="left:369px;top:484.95px;width:6px;height:1px;background:#a0a0a0"></div>
<div class="a" style="left:371.5px;top:472.5px;width:3.5px;height:1px;background:#d6d6d6"></div>
<div class="a" style="left:371.5px;top:476.65px;width:3.5px;height:1px;background:#d6d6d6"></div>
<div class="a" style="left:371.5px;top:480.8px;width:3.5px;height:1px;background:#d6d6d6"></div>
<div class="a" style="left:371.5px;top:489.1px;width:3.5px;height:1px;background:#d6d6d6"></div>
<div class="a" style="left:371.5px;top:493.25px;width:3.5px;height:1px;background:#d6d6d6"></div>
<div class="a" style="left:371.5px;top:497.4px;width:3.5px;height:1px;background:#d6d6d6"></div>
<svg class="a" style="left:380px;top:282px" width="508" height="235" viewBox="380 282 508 235"><defs>
<pattern id="hp" width="3" height="3" patternUnits="userSpaceOnUse"><rect width="3" height="3" fill="#f6f6f6"/><path d="M-1,1 L1,-1 M0,3 L3,0 M2,4 L4,2" stroke="#606060" stroke-width="0.9"/></pattern>
<linearGradient id="gg" x1="0" y1="0" x2="0" y2="1"><stop offset="0" stop-color="#62a062"/><stop offset="0.42" stop-color="#1f7e1f"/><stop offset="1" stop-color="#177a17"/></linearGradient>
<linearGradient id="rg" x1="0" y1="0" x2="0" y2="1"><stop offset="0" stop-color="#e01e1e"/><stop offset="0.5" stop-color="#9c3232"/><stop offset="1" stop-color="#973232"/></linearGradient>
</defs>
<rect x="380" y="282.3" width="508" height="36.67" fill="#ffffff"/>
<rect x="453.33" y="282.3" width="29.33" height="36.67" fill="#f4f4f4"/>
<rect x="556" y="282.3" width="29.33" height="36.67" fill="#f4f4f4"/>
<rect x="658.67" y="282.3" width="29.33" height="36.67" fill="#f4f4f4"/>
<rect x="761.33" y="282.3" width="29.33" height="36.67" fill="#f4f4f4"/>
<rect x="864" y="282.3" width="29.33" height="36.67" fill="#f4f4f4"/>
<rect x="380" y="317.97" width="508" height="1" fill="#e4e4e4"/>
<path d="M380,285 H453.33 V317.97" fill="none" stroke="#f6b5b5" stroke-width="1"/>
<path d="M482.67,317.97 V285 H556 V317.97" fill="none" stroke="#f6b5b5" stroke-width="1"/>
<path d="M585.33,317.97 V285 H658.67 V317.97" fill="none" stroke="#f6b5b5" stroke-width="1"/>
<path d="M688,317.97 V285 H761.33 V317.97" fill="none" stroke="#f6b5b5" stroke-width="1"/>
<path d="M790.67,317.97 V285 H864 V317.97" fill="none" stroke="#f6b5b5" stroke-width="1"/>
<rect x="380" y="318.97" width="508" height="36.67" fill="#f8f8f8"/>
<rect x="453.33" y="318.97" width="29.33" height="36.67" fill="#eff0f0"/>
<rect x="556" y="318.97" width="29.33" height="36.67" fill="#eff0f0"/>
<rect x="658.67" y="318.97" width="29.33" height="36.67" fill="#eff0f0"/>
<rect x="761.33" y="318.97" width="29.33" height="36.67" fill="#eff0f0"/>
<rect x="864" y="318.97" width="29.33" height="36.67" fill="#eff0f0"/>
<rect x="380" y="354.64" width="508" height="1" fill="#e4e4e4"/>
<path d="M380,321.67 H453.33 V354.64" fill="none" stroke="#f6b5b5" stroke-width="1"/>
<path d="M482.67,354.64 V321.67 H556 V354.64" fill="none" stroke="#f6b5b5" stroke-width="1"/>
<path d="M585.33,354.64 V321.67 H658.67 V354.64" fill="none" stroke="#f6b5b5" stroke-width="1"/>
<path d="M688,354.64 V321.67 H761.33 V354.64" fill="none" stroke="#f6b5b5" stroke-width="1"/>
<path d="M790.67,354.64 V321.67 H864 V354.64" fill="none" stroke="#f6b5b5" stroke-width="1"/>
<rect x="380" y="355.64" width="508" height="36.67" fill="#ffffff"/>
<rect x="453.33" y="355.64" width="29.33" height="36.67" fill="#f4f4f4"/>
<rect x="556" y="355.64" width="29.33" height="36.67" fill="#f4f4f4"/>
<rect x="658.67" y="355.64" width="29.33" height="36.67" fill="#f4f4f4"/>
<rect x="761.33" y="355.64" width="29.33" height="36.67" fill="#f4f4f4"/>
<rect x="864" y="355.64" width="29.33" height="36.67" fill="#f4f4f4"/>
<rect x="380" y="391.31" width="508" height="1" fill="#e4e4e4"/>
<path d="M380,358.34 H453.33 V391.31" fill="none" stroke="#f6b5b5" stroke-width="1"/>
<path d="M482.67,391.31 V358.34 H556 V391.31" fill="none" stroke="#f6b5b5" stroke-width="1"/>
<path d="M585.33,391.31 V358.34 H658.67 V391.31" fill="none" stroke="#f6b5b5" stroke-width="1"/>
<path d="M688,391.31 V358.34 H761.33 V391.31" fill="none" stroke="#f6b5b5" stroke-width="1"/>
<path d="M790.67,391.31 V358.34 H864 V391.31" fill="none" stroke="#f6b5b5" stroke-width="1"/>
<rect x="380" y="392.31" width="508" height="36.67" fill="#f8f8f8"/>
<rect x="453.33" y="392.31" width="29.33" height="36.67" fill="#eff0f0"/>
<rect x="556" y="392.31" width="29.33" height="36.67" fill="#eff0f0"/>
<rect x="658.67" y="392.31" width="29.33" height="36.67" fill="#eff0f0"/>
<rect x="761.33" y="392.31" width="29.33" height="36.67" fill="#eff0f0"/>
<rect x="864" y="392.31" width="29.33" height="36.67" fill="#eff0f0"/>
<rect x="380" y="427.98" width="508" height="1" fill="#e4e4e4"/>
<path d="M380,395.01 H453.33 V427.98" fill="none" stroke="#f6b5b5" stroke-width="1"/>
<path d="M482.67,427.98 V395.01 H556 V427.98" fill="none" stroke="#f6b5b5" stroke-width="1"/>
<path d="M585.33,427.98 V395.01 H658.67 V427.98" fill="none" stroke="#f6b5b5" stroke-width="1"/>
<path d="M688,427.98 V395.01 H761.33 V427.98" fill="none" stroke="#f6b5b5" stroke-width="1"/>
<path d="M790.67,427.98 V395.01 H864 V427.98" fill="none" stroke="#f6b5b5" stroke-width="1"/>
<rect x="380" y="428.98" width="508" height="36.67" fill="#ffffff"/>
<rect x="453.33" y="428.98" width="29.33" height="36.67" fill="#f4f4f4"/>
<rect x="556" y="428.98" width="29.33" height="36.67" fill="#f4f4f4"/>
<rect x="658.67" y="428.98" width="29.33" height="36.67" fill="#f4f4f4"/>
<rect x="761.33" y="428.98" width="29.33" height="36.67" fill="#f4f4f4"/>
<rect x="864" y="428.98" width="29.33" height="36.67" fill="#f4f4f4"/>
<rect x="380" y="464.65" width="508" height="1" fill="#e4e4e4"/>
<path d="M380,431.68 H453.33 V464.65" fill="none" stroke="#f6b5b5" stroke-width="1"/>
<path d="M482.67,464.65 V431.68 H556 V464.65" fill="none" stroke="#f6b5b5" stroke-width="1"/>
<path d="M585.33,464.65 V431.68 H658.67 V464.65" fill="none" stroke="#f6b5b5" stroke-width="1"/>
<path d="M688,464.65 V431.68 H761.33 V464.65" fill="none" stroke="#f6b5b5" stroke-width="1"/>
<path d="M790.67,464.65 V431.68 H864 V464.65" fill="none" stroke="#f6b5b5" stroke-width="1"/>
<rect x="380" y="465.65" width="508" height="36.67" fill="#f8f8f8"/>
<rect x="453.33" y="465.65" width="29.33" height="36.67" fill="#eff0f0"/>
<rect x="556" y="465.65" width="29.33" height="36.67" fill="#eff0f0"/>
<rect x="658.67" y="465.65" width="29.33" height="36.67" fill="#eff0f0"/>
<rect x="761.33" y="465.65" width="29.33" height="36.67" fill="#eff0f0"/>
<rect x="864" y="465.65" width="29.33" height="36.67" fill="#eff0f0"/>
<rect x="380" y="501.32" width="508" height="1" fill="#e4e4e4"/>
<path d="M380,468.35 H453.33 V501.32" fill="none" stroke="#f6b5b5" stroke-width="1"/>
<path d="M482.67,501.32 V468.35 H556 V501.32" fill="none" stroke="#f6b5b5" stroke-width="1"/>
<path d="M585.33,501.32 V468.35 H658.67 V501.32" fill="none" stroke="#f6b5b5" stroke-width="1"/>
<path d="M688,501.32 V468.35 H761.33 V501.32" fill="none" stroke="#f6b5b5" stroke-width="1"/>
<path d="M790.67,501.32 V468.35 H864 V501.32" fill="none" stroke="#f6b5b5" stroke-width="1"/>
<rect x="644" y="282" width="15.12" height="35.67" fill="url(#rg)"/>
<rect x="644" y="282" width="15.12" height="3" fill="#f01414"/>
<rect x="688" y="300.74" width="15.12" height="16.93" fill="url(#gg)"/>
<rect x="702.67" y="285.43" width="15.12" height="32.24" fill="url(#gg)"/>
<rect x="717.33" y="292.68" width="15.12" height="24.99" fill="url(#gg)"/>
<rect x="746.67" y="282" width="15.12" height="35.67" fill="url(#rg)"/>
<rect x="746.67" y="282" width="15.12" height="3" fill="#f01414"/>
<rect x="790.67" y="285.43" width="15.12" height="32.24" fill="url(#gg)"/>
<rect x="820" y="285.43" width="44.45" height="32.24" fill="url(#gg)"/>
<rect x="512" y="322.1" width="15.12" height="32.24" fill="url(#gg)"/>
<rect x="585.33" y="332.98" width="15.12" height="21.36" fill="url(#hp)"/>
<rect x="614.67" y="322.1" width="15.12" height="32.24" fill="url(#hp)"/>
<rect x="629.33" y="322.1" width="15.12" height="32.24" fill="url(#gg)"/>
<rect x="644" y="322.1" width="15.12" height="32.24" fill="url(#hp)"/>
<rect x="746.67" y="322.1" width="15.12" height="32.24" fill="url(#gg)"/>
<rect x="790.67" y="322.1" width="15.12" height="32.24" fill="url(#gg)"/>
<rect x="614.67" y="358.77" width="15.12" height="32.24" fill="url(#gg)"/>
<rect x="629.33" y="358.77" width="15.12" height="32.24" fill="url(#hp)"/>
<rect x="746.67" y="358.77" width="15.12" height="32.24" fill="url(#gg)"/>
<rect x="790.67" y="374.49" width="15.12" height="16.52" fill="url(#gg)"/>
<rect x="644" y="395.44" width="15.12" height="32.24" fill="url(#gg)"/>
<rect x="746.67" y="395.44" width="15.12" height="32.24" fill="url(#gg)"/>
<rect x="790.67" y="395.44" width="15.12" height="32.24" fill="url(#gg)"/>
<rect x="600" y="446.22" width="15.12" height="18.13" fill="url(#hp)"/>
<rect x="746.67" y="432.11" width="15.12" height="32.24" fill="url(#gg)"/>
<rect x="790.67" y="432.11" width="29.78" height="32.24" fill="url(#gg)"/>
<rect x="614.67" y="468.78" width="44.45" height="32.24" fill="url(#hp)"/>
<rect x="688" y="468.78" width="29.78" height="32.24" fill="url(#hp)"/>
<rect x="805.33" y="479.66" width="15.12" height="21.36" fill="url(#hp)"/></svg>
<svg class="a" style="left:10px;top:281.7px" width="36" height="36.7" viewBox="0 0 36 36.7"><rect width="36" height="36.7" fill="#dcdcdc"/>
<path d="M8,36.7 C7.6,31 7.4,24 8.4,19.5 C9.2,16.5 11,15 14,14 L16.5,13 L20.5,13 L23,14 C26,15 28,16.5 28.8,19.5 C29.8,24 29.8,31 29.2,36.7 Z" fill="#727b8b"/>
<path d="M11,20 V36.7 M26.5,20 V36.7" stroke="#5d6675" stroke-width="0.8"/>
<path d="M17,13.5 L18.5,17 L20,13.5 Z" fill="#5a6270"/>
<path d="M17.5,16 V28" stroke="#4a515c" stroke-width="1"/>
<ellipse cx="17.8" cy="8.3" rx="3.6" ry="4.8" fill="#c8a48a"/>
<path d="M13.6,7.5 C13,2.8 15.5,0.8 18,0.8 C21,0.8 22.8,2.8 22,7.5 C21.2,5.2 19.6,4.4 18,4.4 C16.4,4.4 14.6,5.2 13.6,7.5 Z" fill="#3b2b22"/></svg>
<svg class="a" style="left:10px;top:318.37px" width="36" height="36.7" viewBox="0 0 36 36.7"><rect width="36" height="36.7" fill="#ffffff"/>
<path d="M4,29 L5.5,20 C6.5,17 9,15.5 13,14.5 L17.5,13.8 L22,14.5 C26,15.5 28.5,17 29.5,20 L32,29 L27.5,29.5 L27.5,36.7 L10.5,36.7 L10.5,29.5 Z" fill="#ee2626"/>
<path d="M4.5,29.3 L9.3,29.6 L9.3,36.7 L5,36.7 Z M27.7,29.6 L31.5,29.3 L31,36.7 L27.7,36.7 Z" fill="#d6ae94"/>
<ellipse cx="18" cy="8.5" rx="4.2" ry="5.6" fill="#d3ad93"/>
<path d="M13.8,7.5 C13.5,3.3 15.6,2 18,2 C20.6,2 22.5,3.3 22.2,7.5 C21.5,5.4 19.8,4.8 18,4.8 C16.2,4.8 14.5,5.4 13.8,7.5 Z" fill="#6b5242"/></svg>
<svg class="a" style="left:10px;top:355.04px" width="36" height="36.7" viewBox="0 0 36 36.7"><rect width="36" height="36.7" fill="#ffffff"/>
<path d="M12.8,14 C12.3,5 14.8,0.6 18.5,0.6 C22.2,0.6 24.6,5 24,14 L21.5,15 L15.5,15 Z" fill="#5b3f2e"/>
<ellipse cx="18.3" cy="7" rx="3.1" ry="4.4" fill="#d4ae96"/>
<path d="M10.8,36.7 C10.2,30 9.6,22 10.5,17 C11.3,13.5 13.5,12.2 15.5,11.8 L18.3,16 L21,11.8 C23.5,12.2 25.5,13.5 26.5,16 C28,19 30.5,22 33.2,24.8 C32.5,27 29.5,28.2 26,28.5 L25.5,36.7 Z" fill="#3d5274"/>
<path d="M25.5,25.5 C27,26.5 29,26.5 31,25.5" stroke="#2c3d58" stroke-width="0.8" fill="none"/></svg>
<svg class="a" style="left:10px;top:391.71px" width="36" height="36.7" viewBox="0 0 36 36.7"><rect width="36" height="36.7" fill="#ffffff"/>
<path d="M8.5,29.5 C8,24 8.3,18 9.5,15.5 C10.8,13.5 13,12.8 16,12.3 L21,12.3 C24,12.8 26.2,13.5 27.5,15.5 C28.7,18 29,24 28.5,29.5 L27,32.5 L10,32.5 Z" fill="#2f4b86"/>
<path d="M16.3,12.5 L18.3,16.5 L20.3,12.5 Z" fill="#f0a040"/>
<path d="M18.3,16.5 V32.5" stroke="#22396a" stroke-width="0.8"/>
<rect x="13" y="32.5" width="11" height="4.2" fill="#1f3060"/>
<path d="M9,29 H12 V33 H9.5 Z M25,29 H28 L27.5,33 H25 Z" fill="#d3a98d"/>
<ellipse cx="18.3" cy="8.3" rx="3.2" ry="4" fill="#d0a88c"/>
<path d="M14.6,5.6 C14.6,2.6 16.3,1.3 18.3,1.3 C20.3,1.3 22,2.6 22,5.6 Z" fill="#f4f4f4" stroke="#dedede" stroke-width="0.5"/></svg>
<svg class="a" style="left:10px;top:428.38px" width="36" height="36.7" viewBox="0 0 36 36.7"><rect width="36" height="36.7" fill="#bfbfbf"/>
<path d="M13.2,13 C12.7,4.5 15,0.6 18.5,0.6 C22,0.6 24.3,4.5 23.8,13 L21,13.5 L16,13.5 Z" fill="#1c1c1c"/>
<ellipse cx="18.5" cy="6.5" rx="2.8" ry="4.2" fill="#d8b098"/>
<path d="M10.5,35 C10.5,28 10.5,20 11.5,16 C12.5,13 14.5,11.5 18.5,11.5 C22.5,11.5 24.5,13 25.5,16 C26.5,20 26.5,28 26.5,35 L24,36.7 L13,36.7 Z" fill="#f2efe9"/>
<ellipse cx="18.5" cy="14" rx="4.2" ry="2.6" fill="#e4e0d8"/>
<path d="M10.5,34 H13 V36.7 H10.5 Z M24,34 H26.5 V36.7 H24 Z" fill="#d6a888"/></svg>
<svg class="a" style="left:10px;top:465.05px" width="36" height="36.7" viewBox="0 0 36 36.7"><rect width="36" height="36.7" fill="#dfe8f6"/>
<path d="M9.5,23.5 C9.5,21.5 11.5,20 13.5,19.2 C12.3,18 11.8,16 11.8,14 C11.8,11 13.3,9.2 15.2,9.2 C17.1,9.2 18.6,11 18.6,14 C18.6,16 18.1,18 17,19.2 L18.5,20 L15.5,24.8 C12,24.8 9.5,24.5 9.5,23.5 Z" fill="#000"/>
<path d="M14,26 C14,24 16.5,22.5 19.2,21.5 C17.8,20 17.2,18 17.2,16 C17.2,13 18.8,11.5 20.8,11.5 C22.8,11.5 24.4,13 24.4,16 C24.4,18 23.8,20 22.4,21.5 C25.1,22.5 27.5,24 27.5,26 C27.5,27.2 24.5,27.8 20.8,27.8 C17,27.8 14,27.2 14,26 Z" fill="#000" stroke="#dfe8f6" stroke-width="0.9"/></svg>
<div class="a" style="left:10px;top:279px;width:878px;height:1.5px;background:#a4c2e8"></div>
<div class="a" style="left:10px;top:280.5px;width:878px;height:1px;background:#d5dde8"></div>
<div class="a" style="left:376px;top:166px;width:4px;height:351px;background:#e2eaf6"></div>
<div class="a" style="left:375px;top:166px;width:2px;height:351px;background:#bcd1ed"></div>
<div class="a" style="left:379px;top:166px;width:1px;height:351px;background:#aac5e9"></div>
<div class="a" style="left:-4px;top:242px;width:8.5px;height:33px;background:#dde7f4;border:1px solid #c5d6ec;border-radius:5px"></div>
<div class="a" style="left:0px;top:253.5px;width:1.6px;height:1.6px;background:#7e93ad"></div><div class="a" style="left:0px;top:259px;width:1.6px;height:1.6px;background:#7e93ad"></div>
</body></html>
